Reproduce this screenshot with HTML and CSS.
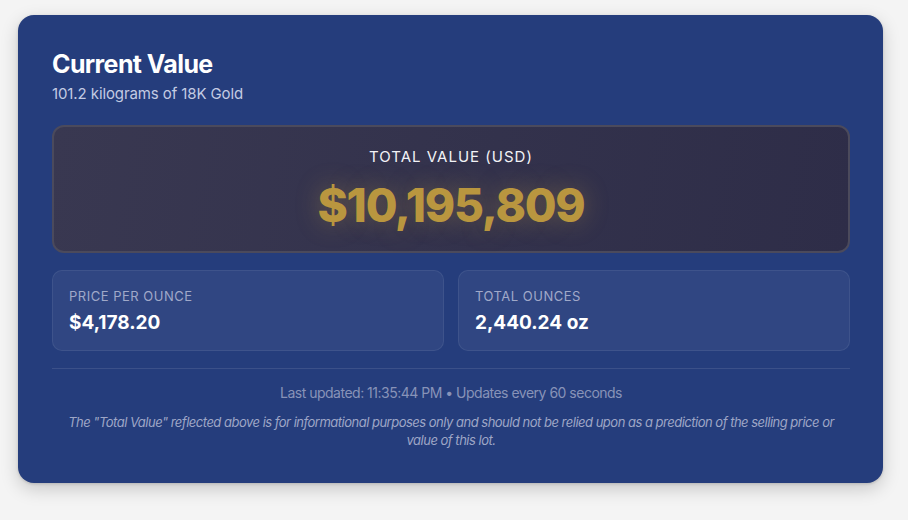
FILE: index.html
```html
<!DOCTYPE html>
<html>
<head>
<meta charset="utf-8">
<link rel="stylesheet" href="styles.css">
</head>
<body>
<div class="card">
  <h1 class="title">Current Value</h1>
  <p class="subtitle">101.2 kilograms of 18K Gold</p>
  <div class="total">
    <div class="total-label">TOTAL VALUE (USD)</div>
    <div class="total-value">$10,195,809</div>
  </div>
  <div class="stats">
    <div class="stat">
      <div class="stat-label">Price per Ounce</div>
      <div class="stat-value">$4,178.20</div>
    </div>
    <div class="stat">
      <div class="stat-label">Total Ounces</div>
      <div class="stat-value">2,440.24 oz</div>
    </div>
  </div>
  <div class="footer">
    <p class="updated">Last updated: 11:35:44 PM • Updates every 60 seconds</p>
    <p class="disclaimer">The "Total Value" reflected above is for informational purposes only and should not be relied upon as a prediction of the selling price or value of this lot.</p>
  </div>
</div>
</body>
</html>
```
FILE: styles.css
```css
* { box-sizing: border-box; }
html { background: #f4f4f4; }
html, body { margin: 0; padding: 0; }
body {
  background: #f4f4f4;
  font-family: Inter, "Noto Sans", sans-serif;
  padding: 15px 25px 37px 18px;
}
.card {
  width: 865px;
  background: #253d7c;
  border-radius: 16px;
  padding: 34px 33px 34px 34px;
  box-shadow: 0 6px 18px rgba(0,0,0,0.18), 0 1px 3px rgba(0,0,0,0.15);
  color: #fff;
}
.title {
  margin: 0;
  font-size: 25px;
  line-height: 31px;
  font-weight: 700;
  letter-spacing: -0.6px;
}
.subtitle {
  margin: 3px 0 0;
  font-size: 15px;
  line-height: 22px;
  letter-spacing: -0.1px;
  color: #c3cbe3;
}
.total {
  margin-top: 20px;
  border: 2px solid #4b4a5c;
  border-radius: 12px;
  background: linear-gradient(100deg, #393851 0%, #2e2d48 100%);
  padding: 20px 0 17px;
  text-align: center;
}
.total-label {
  font-size: 15px;
  line-height: 20px;
  letter-spacing: 1px;
  color: #f2f2f6;
}
.total-value {
  margin-top: 9px;
  font-size: 46px;
  line-height: 58px;
  font-weight: 800;
  letter-spacing: -1.2px;
  color: #b9963f;
  text-shadow: 0 0 24px rgba(200, 160, 70, 0.35);
}
.stats {
  margin-top: 17px;
  display: grid;
  grid-template-columns: 1fr 1fr;
  gap: 14px;
}
.stat {
  background: rgba(255,255,255,0.05);
  border: 1px solid rgba(255,255,255,0.07);
  border-radius: 10px;
  padding: 16px 16px 15px;
}
.stat-label {
  font-size: 13px;
  line-height: 18px;
  text-transform: uppercase;
  letter-spacing: 0.5px;
  color: #a0a9c9;
}
.stat-value {
  margin-top: 6px;
  font-size: 19px;
  line-height: 24px;
  font-weight: 700;
  color: #fff;
}
.footer {
  margin-top: 17px;
  border-top: 1px solid rgba(255,255,255,0.1);
  text-align: center;
}
.updated {
  margin: 14px 0 0;
  font-size: 14px;
  line-height: 20px;
  letter-spacing: -0.5px;
  color: #8893b8;
}
.disclaimer {
  margin: 10px 0 0;
  padding: 0 14px;
  font-size: 13px;
  line-height: 18px;
  letter-spacing: -0.5px;
  font-style: italic;
  color: #9ea6c6;
}
```
